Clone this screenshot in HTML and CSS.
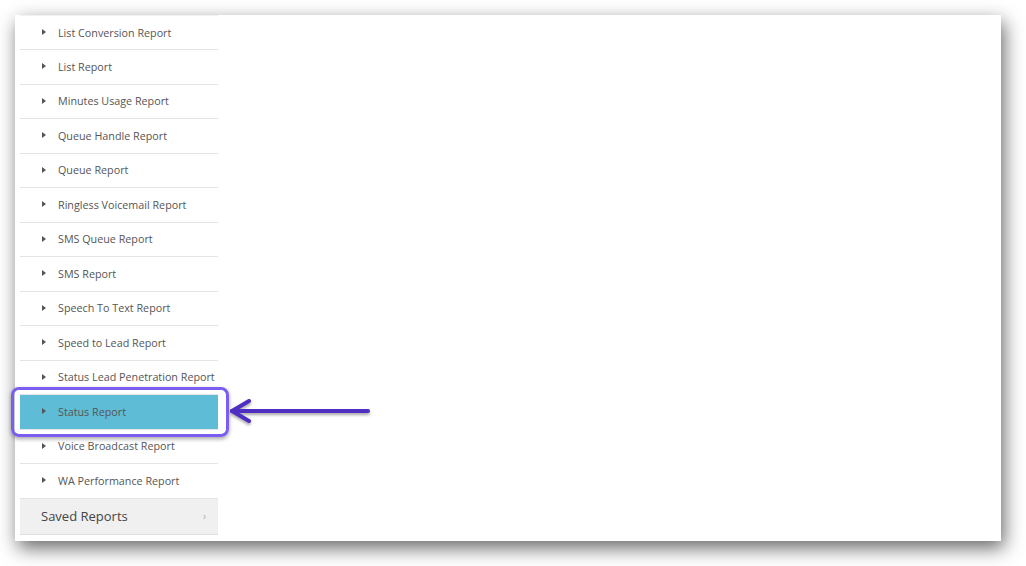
FILE: index.html
```html
<!DOCTYPE html>
<html>
<head>
<meta charset="utf-8">
<link rel="stylesheet" href="styles.css">
</head>
<body>
<div class="window">
  <ul class="menu">
    <li class="item"><span class="caret"></span>List Conversion Report</li>
    <li class="item"><span class="caret"></span>List Report</li>
    <li class="item"><span class="caret"></span>Minutes Usage Report</li>
    <li class="item"><span class="caret"></span>Queue Handle Report</li>
    <li class="item"><span class="caret"></span>Queue Report</li>
    <li class="item"><span class="caret"></span>Ringless Voicemail Report</li>
    <li class="item"><span class="caret"></span>SMS Queue Report</li>
    <li class="item"><span class="caret"></span>SMS Report</li>
    <li class="item"><span class="caret"></span>Speech To Text Report</li>
    <li class="item"><span class="caret"></span>Speed to Lead Report</li>
    <li class="item"><span class="caret"></span>Status Lead Penetration Report</li>
    <li class="item active"><span class="caret"></span>Status Report</li>
    <li class="item"><span class="caret"></span>Voice Broadcast Report</li>
    <li class="item"><span class="caret"></span>WA Performance Report</li>
    <li class="saved">Saved Reports<span class="chev">›</span></li>
  </ul>
</div>
<div class="callout"></div>
<svg class="arrow" width="160" height="40" viewBox="0 0 160 40">
  <g fill="none" stroke="#4f2fc2" stroke-width="4" stroke-linecap="round" stroke-linejoin="round">
    <path d="M4 19 H140"/>
    <path d="M21 9 L4 19 L21 29"/>
  </g>
</svg>
</body>
</html>
```
FILE: styles.css
```css
html, body {
  margin: 0;
  padding: 0;
  background: #ffffff;
  font-family: "Open Sans", "Liberation Sans", sans-serif;
}
body {
  min-height: 566px;
  padding-top: 15px;
  box-sizing: border-box;
}
.window {
  margin: 0 0 0 15px;
  width: 986px;
  height: 526px;
  background: #fff;
  box-shadow: 3px 7px 18px rgba(0, 0, 0, 0.6);
  overflow: hidden;
}
.menu {
  list-style: none;
  margin: 0 0 0 5px;
  padding: 0;
  width: 198px;
  border-top: 1px solid #f2f2f2;
}
.item {
  height: 33.5px;
  border-bottom: 1px solid #e4e4e4;
  font-size: 10.75px;
  color: #555;
  padding-left: 22px;
  white-space: nowrap;
  display: flex;
  align-items: center;
}
.item:first-child {
  height: 33px;
}
.caret {
  width: 0;
  height: 0;
  border-top: 3px solid transparent;
  border-bottom: 3px solid transparent;
  border-left: 4px solid #555;
  margin-right: 12px;
  margin-top: -1px;
}
.active {
  background: #5fbcd6;
}
.saved {
  height: 35px;
  display: flex;
  align-items: center;
  justify-content: space-between;
  padding: 0 12px 0 21px;
  background: #f0f0f0;
  border-bottom: 1px solid #e0e0e0;
  font-size: 13px;
  color: #444;
}
.chev {
  font-size: 10px;
  color: #aaa;
}
.callout {
  position: absolute;
  left: 11px;
  top: 387px;
  width: 212px;
  height: 44px;
  border: 3px solid #7b5df3;
  border-radius: 8px;
  box-shadow: 0 2px 4px rgba(0, 0, 0, 0.35);
}
.arrow {
  position: absolute;
  left: 228px;
  top: 392px;
  filter: drop-shadow(0 2px 1.5px rgba(0, 0, 0, 0.35));
}
```
